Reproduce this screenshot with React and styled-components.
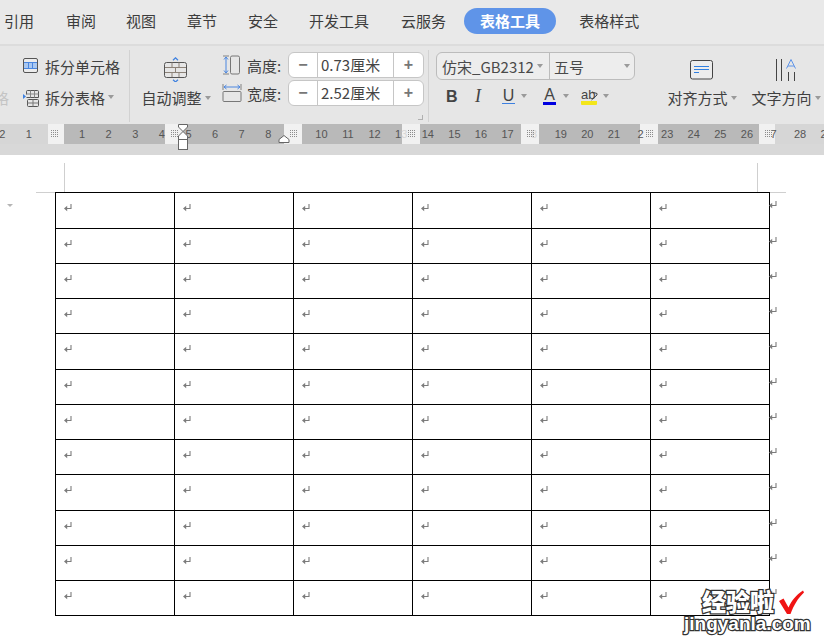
import React from "react";
import styled, { createGlobalStyle } from "styled-components";

const CJK = `"Noto Sans CJK SC", "Liberation Sans", sans-serif`;

const tabs = [
  { label: "引用", gap: 0 },
  { label: "审阅", gap: 32 },
  { label: "视图", gap: 30 },
  { label: "章节", gap: 31 },
  { label: "安全", gap: 31 },
  { label: "开发工具", gap: 31 },
  { label: "云服务", gap: 32 },
  { label: "表格工具", gap: 18, active: true },
  { label: "表格样式", gap: 23 },
];

const rulerSegments = [
  { w: 48, tone: "side" },
  { w: 16, tone: "white" },
  { w: 101, tone: "dark" },
  { w: 18, tone: "white" },
  { w: 101, tone: "dark" },
  { w: 18, tone: "white" },
  { w: 100, tone: "dark" },
  { w: 18, tone: "white" },
  { w: 101, tone: "dark" },
  { w: 18, tone: "white" },
  { w: 101, tone: "dark" },
  { w: 18, tone: "white" },
  { w: 101, tone: "dark" },
  { w: 16, tone: "white" },
  { w: 49, tone: "side" },
];

// second value is a digit washed out by the white margin block
const rulerNumbers = [
  ["2"], ["1"], [""], ["1"], ["2"], ["3"], ["4"], ["5"], ["6"], ["7"], ["8"], [""],
  ["10"], ["11"], ["12"], ["1", "3"], ["14"], ["15"], ["16"], ["17"], ["", "8"],
  ["19"], ["20"], ["21"], ["2"], ["23"], ["24"], ["25"], ["26"], ["7"], ["28"], ["29"],
];
const gripSpots = [50, 170, 289, 407, 526, 645, 764];
const rowHeights = [36, 35, 35, 35, 36, 35, 35, 35, 36, 35, 35, 35];
const columns = [0, 1, 2, 3, 4, 5];

const GlobalStyle = createGlobalStyle`
  html, body {
    margin: 0;
    padding: 0;
    background: #fff;
    overflow: hidden;
  }
`;

const Page = styled.div`
  width: 824px;
  height: 641px;
  overflow: hidden;
  position: relative;
  font-family: ${CJK};
  color: #333;
`;

const TabBar = styled.div`
  height: 44px;
  background: #e9e9e9;
  border-bottom: 2px solid #dcdcdc;
  display: flex;
  align-items: center;
  padding-left: 4px;
`;

const Tab = styled.div`
  font-size: 15px;
  line-height: 26px;
  height: 26px;
  margin-left: ${(p) => p.$gap}px;
  padding: ${(p) => (p.$active ? "0 16px" : "0")};
  border-radius: 13px;
  margin-top: -2px;
  color: ${(p) => (p.$active ? "#fff" : "#3c3c3c")};
  background: ${(p) => (p.$active ? "#5f94e8" : "transparent")};
  font-weight: ${(p) => (p.$active ? 700 : 400)};
  white-space: nowrap;
`;

const Ribbon = styled.div`
  height: 78px;
  background: #e6e6e6;
  display: flex;
  position: relative;
`;

const Group = styled.div`
  width: ${(p) => p.$w}px;
  flex: none;
  box-sizing: border-box;
  display: flex;
  flex-direction: column;
  gap: ${(p) => p.$gap || 0}px;
  padding: ${(p) => p.$pad || "0"};
  border-right: ${(p) => (p.$line ? "1px solid #d2d2d2" : "none")};
  margin: ${(p) => p.$margin || "0"};
`;

const SmallRow = styled.div`
  display: flex;
  align-items: center;
  height: 28px;
  gap: ${(p) => p.$gap || 5}px;
  font-size: 15px;
  color: #404040;
  white-space: nowrap;
  padding-left: ${(p) => p.$indent || 0}px;
`;

const FadedChar = styled.span`
  color: #c4c4c4;
  width: 16px;
  margin-left: -6px;
  margin-right: 8px;
  overflow: hidden;
  flex: none;
`;

const Caret = styled.span`
  display: inline-block;
  width: 0;
  height: 0;
  border-left: 3.5px solid transparent;
  border-right: 3.5px solid transparent;
  border-top: 4px solid ${(p) => p.$color || "#9a9a9a"};
  margin-left: ${(p) => p.$left ?? 3}px;
  vertical-align: middle;
  flex: none;
`;

const BigButton = styled.div`
  display: flex;
  flex-direction: column;
  align-items: center;
  width: ${(p) => p.$w}px;
  flex: none;
  font-size: 15px;
  color: #404040;
  white-space: nowrap;
`;

const BigLabel = styled.div`
  margin-top: ${(p) => p.$top}px;
  line-height: 20px;
  display: flex;
  align-items: center;
`;

const SizeRow = styled.div`
  display: flex;
  align-items: center;
  height: 26px;
  font-size: 15px;
  color: #404040;
  gap: 3px;
`;

const SizeIcon = styled.div`
  width: 25px;
  display: flex;
  justify-content: center;
  flex: none;
`;

const SizeLabel = styled.div`
  width: 38px;
  flex: none;
  white-space: nowrap;
`;

const Spinner = styled.div`
  width: 136px;
  height: 26px;
  box-sizing: border-box;
  background: #fff;
  border: 1px solid #c6c6c6;
  border-radius: 6px;
  display: flex;
  flex: none;
`;

const SpinButton = styled.div`
  width: ${(p) => p.$w}px;
  flex: none;
  display: flex;
  align-items: center;
  justify-content: center;
  font-family: "Liberation Sans", sans-serif;
  font-weight: 700;
  font-size: 16px;
  color: #777;
`;

const SpinValue = styled.div`
  flex: 1;
  border-left: 1px solid #c6c6c6;
  border-right: 1px solid #c6c6c6;
  padding-left: 3px;
  font-size: 15px;
  line-height: 24px;
  color: #444;
  white-space: nowrap;
`;

const FontPicker = styled.div`
  width: 199px;
  height: 28px;
  box-sizing: border-box;
  border: 1px solid #bcbcbc;
  border-radius: 6px;
  background: #ededed;
  display: flex;
  align-items: center;
  font-size: 15px;
  color: #4a4a4a;
  white-space: nowrap;
`;

const FontName = styled.div`
  width: 113px;
  flex: none;
  padding-left: 5px;
  box-sizing: border-box;
  display: flex;
  align-items: center;
  border-right: 1px solid #bcbcbc;
  height: 100%;
`;

const FontSize = styled.div`
  flex: 1;
  padding: 0 4px;
  display: flex;
  align-items: center;
  justify-content: space-between;
`;

const FormatRow = styled.div`
  display: flex;
  align-items: center;
  height: 26px;
  margin-top: 3px;
  padding-left: 10px;
`;

const FormatItem = styled.div`
  width: ${(p) => p.$w}px;
  flex: none;
  display: flex;
  align-items: center;
`;

const FormatGlyph = styled.span`
  font-family: ${(p) => (p.$serif ? '"Liberation Serif", serif' : '"Liberation Sans", sans-serif')};
  font-size: ${(p) => p.$size || 16}px;
  font-weight: ${(p) => (p.$bold ? 700 : 400)};
  font-style: ${(p) => (p.$italic ? "italic" : "normal")};
  color: #444;
  line-height: 15px;
  width: ${(p) => (p.$boxed ? "13px" : "auto")};
  text-align: center;
  border-bottom: ${(p) => (p.$under ? `${p.$thick || 1}px solid ${p.$under}` : "none")};
  display: inline-block;
`;

const Highlight = styled.span`
  display: inline-flex;
  align-items: flex-end;
  height: 14px;
  width: 16px;
  justify-content: flex-start;
  font-family: "Liberation Sans", sans-serif;
  font-size: 13px;
  line-height: 12px;
  color: #444;
  border-bottom: 4px solid #f3e61a;
  border-radius: 1px;
`;

const DialogMark = styled.div`
  position: absolute;
  left: 418px;
  top: 69px;
  width: 4px;
  height: 4px;
  border-right: 1px solid #b0b0b0;
  border-bottom: 1px solid #b0b0b0;
`;

const Ruler = styled.div`
  height: 31px;
  background: #d8d8d8;
  position: relative;
  overflow: hidden;
`;

const RulerTrack = styled.div`
  display: flex;
  height: 20px;
`;

const RulerSegment = styled.div`
  flex: none;
  width: ${(p) => p.$w}px;
  background: ${(p) =>
    p.$tone === "dark" ? "#b9b9b9" : p.$tone === "white" ? "#f1f1f1" : "#d6d6d6"};
`;

const RulerNumbers = styled.div`
  position: absolute;
  left: -11px;
  top: 0;
  height: 20px;
  display: flex;
`;

const RulerNumber = styled.div`
  width: 26.6px;
  flex: none;
  text-align: center;
  font-family: "Liberation Sans", sans-serif;
  font-size: 11px;
  line-height: 20px;
  color: #555;
`;

const WashedDigit = styled.span`
  color: #d6d6d6;
`;

const Grip = styled.div`
  position: absolute;
  top: 6px;
  left: ${(p) => p.$x}px;
  width: 8px;
  height: 8px;
  background-image: conic-gradient(#8c8c8c 25%, transparent 0);
  background-size: 2px 2px;
`;

const Marker = styled.svg`
  position: absolute;
  top: 0;
  left: ${(p) => p.$x}px;
`;

const Sheet = styled.div`
  position: relative;
  padding: 37px 0 0 55px;
`;

const PageCorner = styled.div`
  position: absolute;
  background: #cfcfcf;
  left: ${(p) => p.$x}px;
  top: ${(p) => p.$y}px;
  width: ${(p) => p.$w}px;
  height: ${(p) => p.$h}px;
`;

const SideCaret = styled.div`
  position: absolute;
  left: 7px;
  top: 49px;
  width: 0;
  height: 0;
  border-left: 3.5px solid transparent;
  border-right: 3.5px solid transparent;
  border-top: 3px solid #b5b5b5;
`;

const Table = styled.div`
  width: 715px;
  box-sizing: border-box;
  border-top: 1px solid #000;
  border-left: 1px solid #000;
  display: flex;
  flex-direction: column;
`;

const Row = styled.div`
  display: grid;
  grid-template-columns: repeat(6, 119px);
  height: ${(p) => p.$h}px;
  position: relative;
`;

const Cell = styled.div`
  box-sizing: border-box;
  border-right: 1px solid #000;
  border-bottom: 1px solid #000;
  padding: 11px 0 0 8px;
`;

const RowEnd = styled.div`
  position: absolute;
  left: 713px;
  top: 8px;
`;

const Watermark = styled.div`
  position: absolute;
  left: 684px;
  top: 588px;
  width: 130px;
`;

const WatermarkCn = styled.div`
  margin-left: 18px;
  font-size: 24px;
  line-height: 26px;
  font-weight: 900;
  color: #fff;
  -webkit-text-stroke: 2.5px #333;
  paint-order: stroke fill;
  white-space: nowrap;
`;

const WatermarkEn = styled.div`
  font-family: "Liberation Sans", sans-serif;
  font-size: 19px;
  line-height: 20px;
  font-weight: 700;
  color: #fff;
  -webkit-text-stroke: 2.5px #333;
  paint-order: stroke fill;
  white-space: nowrap;
`;

const WatermarkCheck = styled.svg`
  position: absolute;
  left: 95px;
  top: 2px;
`;

const ReturnMark = () => (
  <svg width="8" height="8" viewBox="0 0 8 8" style={{ display: "block" }}>
    <path d="M7 0V4.5H2" fill="none" stroke="#7c7c7c" strokeWidth="1.1" />
    <path d="M0 4.5L3.2 1.8V7.2Z" fill="#7c7c7c" />
  </svg>
);

const SplitCellIcon = () => (
  <svg width="16" height="16" viewBox="0 0 16 16">
    <rect x="0.5" y="0.5" width="14" height="14" rx="1.5" fill="#ececec" stroke="#555" />
    <rect x="1" y="5" width="13" height="5" fill="#a9c8f2" />
    <path d="M1 4.5H14M1 10.5H14" stroke="#4a86e0" fill="none" />
    <path d="M5.5 5V10M9.5 5V10" stroke="#4a86e0" fill="none" />
  </svg>
);

const SplitTableIcon = () => (
  <svg width="17" height="17" viewBox="0 0 17 17" style={{ marginTop: 2 }}>
    <path d="M0 4L3 6.5L0 9Z" fill="#3d80e0" />
    <path d="M3.5 4.5V1.5A1 1 0 0 1 4.5 .5H14.5A1 1 0 0 1 15.5 1.5V7.5H3.5" fill="none" stroke="#555" />
    <path d="M3.5 4H15.5M7.5 .5V7.5M11.5 .5V7.5" stroke="#888" fill="none" />
    <rect x="4.5" y="9.5" width="11" height="7" rx="1" fill="none" stroke="#555" />
    <path d="M4.5 13H15.5M10 9.5V16.5" stroke="#777" fill="none" />
  </svg>
);

const AutoFitIcon = () => (
  <svg width="24" height="25" viewBox="0 0 24 25">
    <rect x="0.5" y="5.5" width="22" height="15" rx="2" fill="none" stroke="#555" />
    <path d="M1 10.5H22M1 15.5H22M8 5.5V10.5M15 5.5V10.5M11.5 10.5V15.5M8 15.5V20M15 15.5V20" stroke="#8c8278" fill="none" />
    <path d="M9 3.2L11.5 0.8L14 3.2M9 22.8L11.5 25L14 22.8" stroke="#3d80e0" strokeWidth="1.2" fill="none" />
  </svg>
);

const HeightIcon = () => (
  <svg width="18" height="20" viewBox="0 0 18 20">
    <rect x="7.5" y="1" width="9" height="18" rx="1.5" fill="none" stroke="#777" />
    <path d="M0 1H6M0 19H6" stroke="#b4b4b4" strokeWidth="2" fill="none" />
    <path d="M3 2V18" stroke="#4a86e0" fill="none" />
    <path d="M1 4.5L3 2L5 4.5M1 15.5L3 18L5 15.5" stroke="#4a86e0" fill="none" />
  </svg>
);

const WidthIcon = () => (
  <svg width="20" height="18" viewBox="0 0 20 18">
    <rect x="1" y="7.5" width="18" height="10" rx="1" fill="none" stroke="#777" />
    <path d="M1 0V6M19 0V6" stroke="#b4b4b4" strokeWidth="2" fill="none" />
    <path d="M2 3H18" stroke="#4a86e0" fill="none" />
    <path d="M4.5 1L2 3L4.5 5M15.5 1L18 3L15.5 5" stroke="#4a86e0" fill="none" />
  </svg>
);

const AlignIcon = () => (
  <svg width="24" height="20" viewBox="0 0 24 20">
    <rect x="0.5" y="0.5" width="22" height="18.5" rx="2" fill="#ececec" stroke="#444" />
    <path d="M4 6.5H19M4 9.5H19M4 12.5H9" stroke="#2f7fe0" fill="none" />
  </svg>
);

const DirectionIcon = () => (
  <svg width="20" height="23" viewBox="0 0 20 23">
    <path d="M0.5 0V22M5.5 0V22" stroke="#444" fill="none" />
    <path d="M10.5 9.5L15 0.5L19.5 9.5M12 7H18" stroke="#5f94e8" fill="none" />
    <path d="M12.5 13V22M18.5 13V22" stroke="#444" fill="none" />
  </svg>
);

const HighlightPen = () => (
  <svg width="7" height="12" viewBox="0 0 7 12" style={{ marginLeft: -6, marginBottom: 3, flex: "none" }}>
    <path d="M0.5 11L6 6V4.5L1 3" fill="none" stroke="#444" />
  </svg>
);

const App = () => (
  <Page>
    <GlobalStyle />
    <TabBar>
      {tabs.map((t) => (
        <Tab key={t.label} $gap={t.gap} $active={t.active}>
          {t.label}
        </Tab>
      ))}
    </TabBar>

    <Ribbon>
      <Group $w={130} $line $pad="2px 0 0 0" $margin="4px 0 2px 0" $gap={3}>
        <SmallRow $indent={23} $gap={6}>
          <SplitCellIcon />
          拆分单元格
        </SmallRow>
        <SmallRow $gap={5}>
          <FadedChar>格</FadedChar>
          <SplitTableIcon />
          拆分表格
          <Caret $left={-2} />
        </SmallRow>
      </Group>

      <Group $w={88} $pad="11px 0 0 4px">
        <BigButton $w={84}>
          <AutoFitIcon />
          <BigLabel $top={6}>
            自动调整
            <Caret />
          </BigLabel>
        </BigButton>
      </Group>

      <Group $w={211} $pad="2px 0 0 1px" $gap={2} $line $margin="4px 0 2px 0">
        <SizeRow>
          <SizeIcon>
            <HeightIcon />
          </SizeIcon>
          <SizeLabel>高度:</SizeLabel>
          <Spinner>
            <SpinButton $w={28}>−</SpinButton>
            <SpinValue>0.73厘米</SpinValue>
            <SpinButton $w={29}>+</SpinButton>
          </Spinner>
        </SizeRow>
        <SizeRow>
          <SizeIcon>
            <WidthIcon />
          </SizeIcon>
          <SizeLabel>宽度:</SizeLabel>
          <Spinner>
            <SpinButton $w={28}>−</SpinButton>
            <SpinValue>2.52厘米</SpinValue>
            <SpinButton $w={29}>+</SpinButton>
          </Spinner>
        </SizeRow>
      </Group>
      <DialogMark />

      <Group $w={230} $pad="6px 0 0 7px">
        <FontPicker>
          <FontName>
            仿宋_GB2312
            <Caret $left={3} />
          </FontName>
          <FontSize>
            五号
            <Caret />
          </FontSize>
        </FontPicker>
        <FormatRow>
          <FormatItem $w={29}>
            <FormatGlyph $bold $size={16}>B</FormatGlyph>
          </FormatItem>
          <FormatItem $w={27}>
            <FormatGlyph $serif $italic $size={18}>I</FormatGlyph>
          </FormatItem>
          <FormatItem $w={41}>
            <FormatGlyph $under="#3d80e0" $boxed>U</FormatGlyph>
            <Caret $left={6} />
          </FormatItem>
          <FormatItem $w={38}>
            <FormatGlyph $under="#0000e0" $thick={3} $boxed>A</FormatGlyph>
            <Caret $left={7} />
          </FormatItem>
          <FormatItem $w={36}>
            <Highlight>ab</Highlight>
            <HighlightPen />
            <Caret $left={5} />
          </FormatItem>
        </FormatRow>
      </Group>

      <Group $w={92} $pad="14px 0 0 7px">
        <BigButton $w={72}>
          <AlignIcon />
          <BigLabel $top={8}>
            对齐方式
            <Caret />
          </BigLabel>
        </BigButton>
      </Group>

      <Group $w={70} $pad="13px 0 0 0">
        <BigButton $w={70}>
          <DirectionIcon />
          <BigLabel $top={6}>
            文字方向
            <Caret />
          </BigLabel>
        </BigButton>
      </Group>
    </Ribbon>

    <Ruler>
      <RulerTrack>
        {rulerSegments.map((s, i) => (
          <RulerSegment key={i} $w={s.w} $tone={s.tone} />
        ))}
      </RulerTrack>
      <RulerNumbers>
        {rulerNumbers.map(([n, washed], i) => (
          <RulerNumber key={i}>
            {n}
            {washed && <WashedDigit>{washed}</WashedDigit>}
          </RulerNumber>
        ))}
      </RulerNumbers>
      {gripSpots.map((x) => (
        <Grip key={x} $x={x} />
      ))}
      <Marker $x={177} width="12" height="27" viewBox="0 0 12 27">
        <path d="M1.5 0.5H10.5V3L6 7.5L10.5 12V15.5H1.5V12L6 7.5L1.5 3Z" fill="#fff" stroke="#666" />
        <rect x="1.5" y="15.5" width="9" height="10" fill="#fff" stroke="#666" />
      </Marker>
      <Marker $x={278} width="12" height="20" viewBox="0 0 12 20">
        <path d="M1 18.5V15.5L6 11.5L11 15.5V18.5Z" fill="#fff" stroke="#666" />
      </Marker>
    </Ruler>

    <Sheet>
      <PageCorner $x={64} $y={8} $w={1} $h={29} />
      <PageCorner $x={36} $y={37} $w={19} $h={1} />
      <PageCorner $x={757} $y={8} $w={1} $h={29} />
      <PageCorner $x={770} $y={37} $w={16} $h={1} />
      <SideCaret />
      <Table>
        {rowHeights.map((h, r) => (
          <Row key={r} $h={h}>
            {columns.map((c) => (
              <Cell key={c}>
                <ReturnMark />
              </Cell>
            ))}
            <RowEnd>
              <ReturnMark />
            </RowEnd>
          </Row>
        ))}
      </Table>
    </Sheet>

    <Watermark>
      <WatermarkCn>经验啦</WatermarkCn>
      <WatermarkEn>jingyanla.com</WatermarkEn>
      <WatermarkCheck width="26" height="25" viewBox="0 0 26 25">
        <path d="M0 11L4.5 8.5L9.5 17.5C13 10 17 5 24 0.5L25 2.5C19 8 15 15 11.5 24H8Z" fill="#f01414" />
      </WatermarkCheck>
    </Watermark>
  </Page>
);

export default App;
